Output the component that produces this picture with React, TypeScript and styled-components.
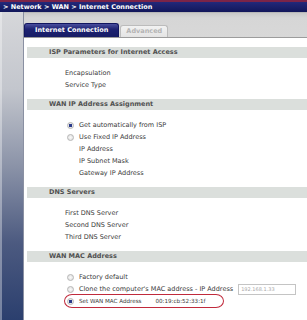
import styled, { createGlobalStyle } from "styled-components";

const GlobalStyle = createGlobalStyle`
    html, body {
        margin: 0;
        padding: 0;
        background: #ffffff;
    }
    body {
        font-family: "DejaVu Sans", Verdana, sans-serif;
        font-size: 6.5px;
        color: #3c3c3c;
    }
`;

const sections = [
    { title: "ISP Parameters for Internet Access", rows: [{ label: "Encapsulation" }, { label: "Service Type" }] },
    {
        title: "WAN IP Address Assignment",
        rows: [
            { label: "Get automatically from ISP", radio: "on" },
            { label: "Use Fixed IP Address", radio: "off" },
            { label: "IP Address", indent: true },
            { label: "IP Subnet Mask", indent: true },
            { label: "Gateway IP Address", indent: true },
        ],
    },
    {
        title: "DNS Servers",
        rows: [{ label: "First DNS Server" }, { label: "Second DNS Server" }, { label: "Third DNS Server" }],
    },
];

const App = () => {
    return <Page>
        <GlobalStyle />
        <TopBar>&gt; Network &gt; WAN &gt; Internet Connection</TopBar>
        <Body>
            <Sidebar />
            <Main>
                <TabStrip>
                    <Tab active>Internet Connection</Tab>
                    <Tab>Advanced</Tab>
                </TabStrip>
                <Content>
                    {sections.map((section) => (
                        <Section key={section.title}>
                            <SectionHeader>{section.title}</SectionHeader>
                            <Rows>
                                {section.rows.map((row) => (
                                    <Row key={row.label} indent={!!row.radio || !!row.indent}>
                                        {row.radio && <Radio checked={row.radio === "on"} />}
                                        {row.label}
                                    </Row>
                                ))}
                            </Rows>
                        </Section>
                    ))}
                    <Section>
                        <SectionHeader>WAN MAC Address</SectionHeader>
                        <Rows>
                            <Row indent>
                                <Radio />
                                Factory default
                            </Row>
                            <Row indent>
                                <Radio />
                                Clone the computer's MAC address - IP Address
                                <IpInput>192.168.1.33</IpInput>
                            </Row>
                            <Row indent small>
                                {/* hand-drawn red marker around the chosen option */}
                                <Highlight />
                                <Radio checked />
                                Set WAN MAC Address
                                <MacValue>00:19:cb:52:33:1f</MacValue>
                            </Row>
                        </Rows>
                    </Section>
                </Content>
            </Main>
        </Body>
    </Page>
}

const Page = styled.div`
    width: 307px;
    height: 320px;
    overflow: hidden;
    display: flex;
    flex-direction: column;
`;

const TopBar = styled.div`
    height: 10px;
    border-top: 2px solid #7c2448;
    background: linear-gradient(#23287a, #12175a);
    color: #ffffff;
    font-weight: bold;
    line-height: 10px;
    padding-left: 3px;
    white-space: nowrap;
`;

const Body = styled.div`
    flex: 1;
    display: flex;
`;

const Sidebar = styled.div`
    width: 23px;
    border-right: 1px solid #8a90a2;
    background: linear-gradient(#d6d7da 0%, #c3c6cd 25%, #8b93a8 50%, #4c5a80 75%, #2b3f6e 100%);
    box-shadow: inset 2px 0 0 rgba(255, 255, 255, 0.35);
`;

const Main = styled.div`
    flex: 1;
    display: flex;
    flex-direction: column;
`;

const TabStrip = styled.div`
    height: 24px;
    display: flex;
    align-items: flex-end;
    gap: 1px;
    background: linear-gradient(#c9c9c9, #d6d6d6 20%, #d8d8d8);
    border-top: 1px solid #b8b8b8;
    border-bottom: 1px solid #9c9c9c;
`;

interface TabProps {
    active?: boolean;
}

const Tab = styled.div<TabProps>`
    height: ${(props) => (props.active ? "13px" : "11px")};
    line-height: ${(props) => (props.active ? "13px" : "11px")};
    padding: 0 ${(props) => (props.active ? "10px" : "5px")};
    font-weight: bold;
    white-space: nowrap;
    border-radius: 3px 3px 0 0;
    color: ${(props) => (props.active ? "#ffffff" : "#b4b4b4")};
    background: ${(props) => (props.active ? "linear-gradient(#4a4f9e, #1d2272 40%, #171c66)" : "linear-gradient(#f2f2f2, #e4e4e4)")};
    border: 1px solid ${(props) => (props.active ? "#121660" : "#bcbcbc")};
    border-bottom: none;
`;

const Content = styled.div`
    flex: 1;
    background: #ffffff;
    padding: 9px 0 0 3px;
`;

const Section = styled.div`
    display: flex;
    flex-direction: column;
`;

const SectionHeader = styled.div`
    height: 11px;
    line-height: 11px;
    padding-left: 22px;
    background: #dbdfdc;
    color: #505050;
    font-weight: bold;
    white-space: nowrap;
`;

const Rows = styled.div`
    padding: 9px 0 8px 38px;
    display: flex;
    flex-direction: column;
`;

interface RowProps {
    indent?: boolean;
    small?: boolean;
}

const Row = styled.div<RowProps>`
    position: relative;
    height: 12px;
    display: flex;
    align-items: center;
    padding-left: ${(props) => (props.indent ? "14px" : "0")};
    font-size: ${(props) => (props.small ? "5.6px" : "6.5px")};
    white-space: nowrap;
    color: #3a3a3a;
`;

interface RadioProps {
    checked?: boolean;
}

const Radio = styled.span<RadioProps>`
    position: absolute;
    left: 2px;
    top: 3px;
    width: 5px;
    height: 5px;
    border-radius: 50%;
    border: 1px solid #b6b6b6;
    background: ${(props) => (props.checked ? "radial-gradient(circle, #2a3a8a 0 1.6px, #e8e8e8 2px)" : "radial-gradient(circle, #fafafa, #dcdcdc)")};
`;

const IpInput = styled.span`
    margin-left: 5px;
    width: 54px;
    height: 9px;
    line-height: 9px;
    padding-left: 2px;
    border: 1px solid #c4c4c4;
    color: #a8a8a8;
    font-size: 5px;
`;

const MacValue = styled.span`
    margin-left: 14px;
`;

const Highlight = styled.span`
    position: absolute;
    left: -1px;
    top: -1px;
    width: 158px;
    height: 12px;
    border: 1.5px solid #c02a3c;
    border-radius: 8px / 7px;
`;

export default App;
